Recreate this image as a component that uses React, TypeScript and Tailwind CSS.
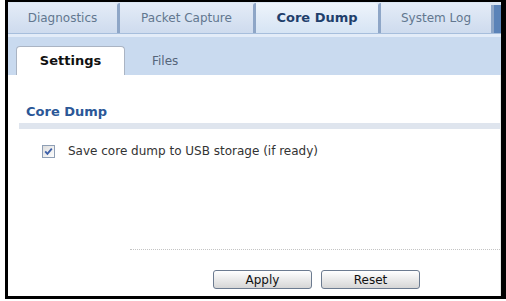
const tabs = [
  { label: 'Diagnostics', width: 'w-[109px]', active: false },
  { label: 'Packet Capture', width: 'w-[136px]', active: false },
  { label: 'Core Dump', width: 'w-[125px]', active: true },
  { label: 'System Log', width: 'w-[113px]', active: false },
];

const CheckedBox = () => (
  <svg width="13" height="13" viewBox="0 0 13 13" className="shrink-0">
    <defs>
      <linearGradient id="cbg" x1="0" y1="0" x2="1" y2="1">
        <stop offset="0" stopColor="#dcdcdc" />
        <stop offset="1" stopColor="#ffffff" />
      </linearGradient>
    </defs>
    <rect x="0.5" y="0.5" width="12" height="12" fill="url(#cbg)" stroke="#8f9fb5" />
    <path d="M3.2 6.4 L5.4 8.9 L9.8 3.6" fill="none" stroke="#3d5fa8" strokeWidth="1.8" />
  </svg>
);

const Button = ({ label }: { label: string }) => (
  <button
    type="button"
    className="w-[99px] h-[19px] rounded-[3px] border border-[#6c7b90] bg-linear-to-b from-[#ffffff] to-[#d6d6d6] text-[12px] leading-none text-[#111]"
  >
    {label}
  </button>
);

export default function App() {
  return (
    <div className="w-[506px] h-[301px] bg-white pl-[5px] pb-[2px]">
      <div
        className="h-full flex flex-col border-black border-l-[3px] border-t-[2px] border-r-[5px] border-b-[3px] overflow-hidden"
        style={{ fontFamily: '"DejaVu Sans", Verdana, sans-serif' }}
      >
        {/* top tabs */}
        <div className="h-[31px] flex items-end bg-[#dbe6f3]">
          {tabs.map((t, i) => (
            <div
              key={t.label}
              className={`${t.width} h-[30px] flex items-center justify-center rounded-t-[3px] ${
                i > 0 ? 'border-l-[3px] border-[#8ea6c7]' : ''
              } ${
                t.active
                  ? 'bg-linear-to-b from-[#eef4fb] to-[#d6e4f4] text-[#1f3f6c] font-bold text-[13px]'
                  : 'bg-linear-to-b from-[#e4ecf7] to-[#cedbee] text-[#62778f] text-[12px]'
              }`}
            >
              {t.label}
            </div>
          ))}
          <div className="flex-1 h-[28px] border-l-[3px] border-[#8ea6c7] bg-[#5b83b8]" />
        </div>
        <div className="h-[1px] bg-[#a6bedc]" />
        <div className="h-[3px] bg-[#e3ecf8]" />

        {/* sub tabs */}
        <div className="h-[38px] bg-[#c9daef] flex items-end pl-[8px]">
          <div className="w-[109px] h-[29px] bg-white border border-b-0 border-[#aab4c3] rounded-t-[4px] flex items-center justify-center font-bold text-[13px] text-[#111]">
            Settings
          </div>
          <div className="h-[29px] flex items-center ml-[27px] text-[12px] text-[#55657a]">Files</div>
        </div>

        {/* content */}
        <div className="flex-1 bg-white flex flex-col border-r border-[#e8e8e8]">
          <div className="pt-[29px] pl-[18px] text-[13px] leading-[16px] font-bold text-[#2b5797]">Core Dump</div>
          <div className="mt-[3px] ml-[11px] h-[6px] bg-[#dfe5ee]" />
          <div className="mt-[16px] pl-[34px] flex items-center gap-[13px] text-[12px] leading-[13px] text-[#333]">
            <CheckedBox />
            <span>Save core dump to USB storage (if ready)</span>
          </div>
          <div className="mt-[91px] ml-[122px] border-t border-dotted border-[#c4c4c4]" />
          <div className="mt-[20px] pl-[205px] flex gap-[9px]">
            <Button label="Apply" />
            <Button label="Reset" />
          </div>
        </div>
      </div>
    </div>
  );
}
